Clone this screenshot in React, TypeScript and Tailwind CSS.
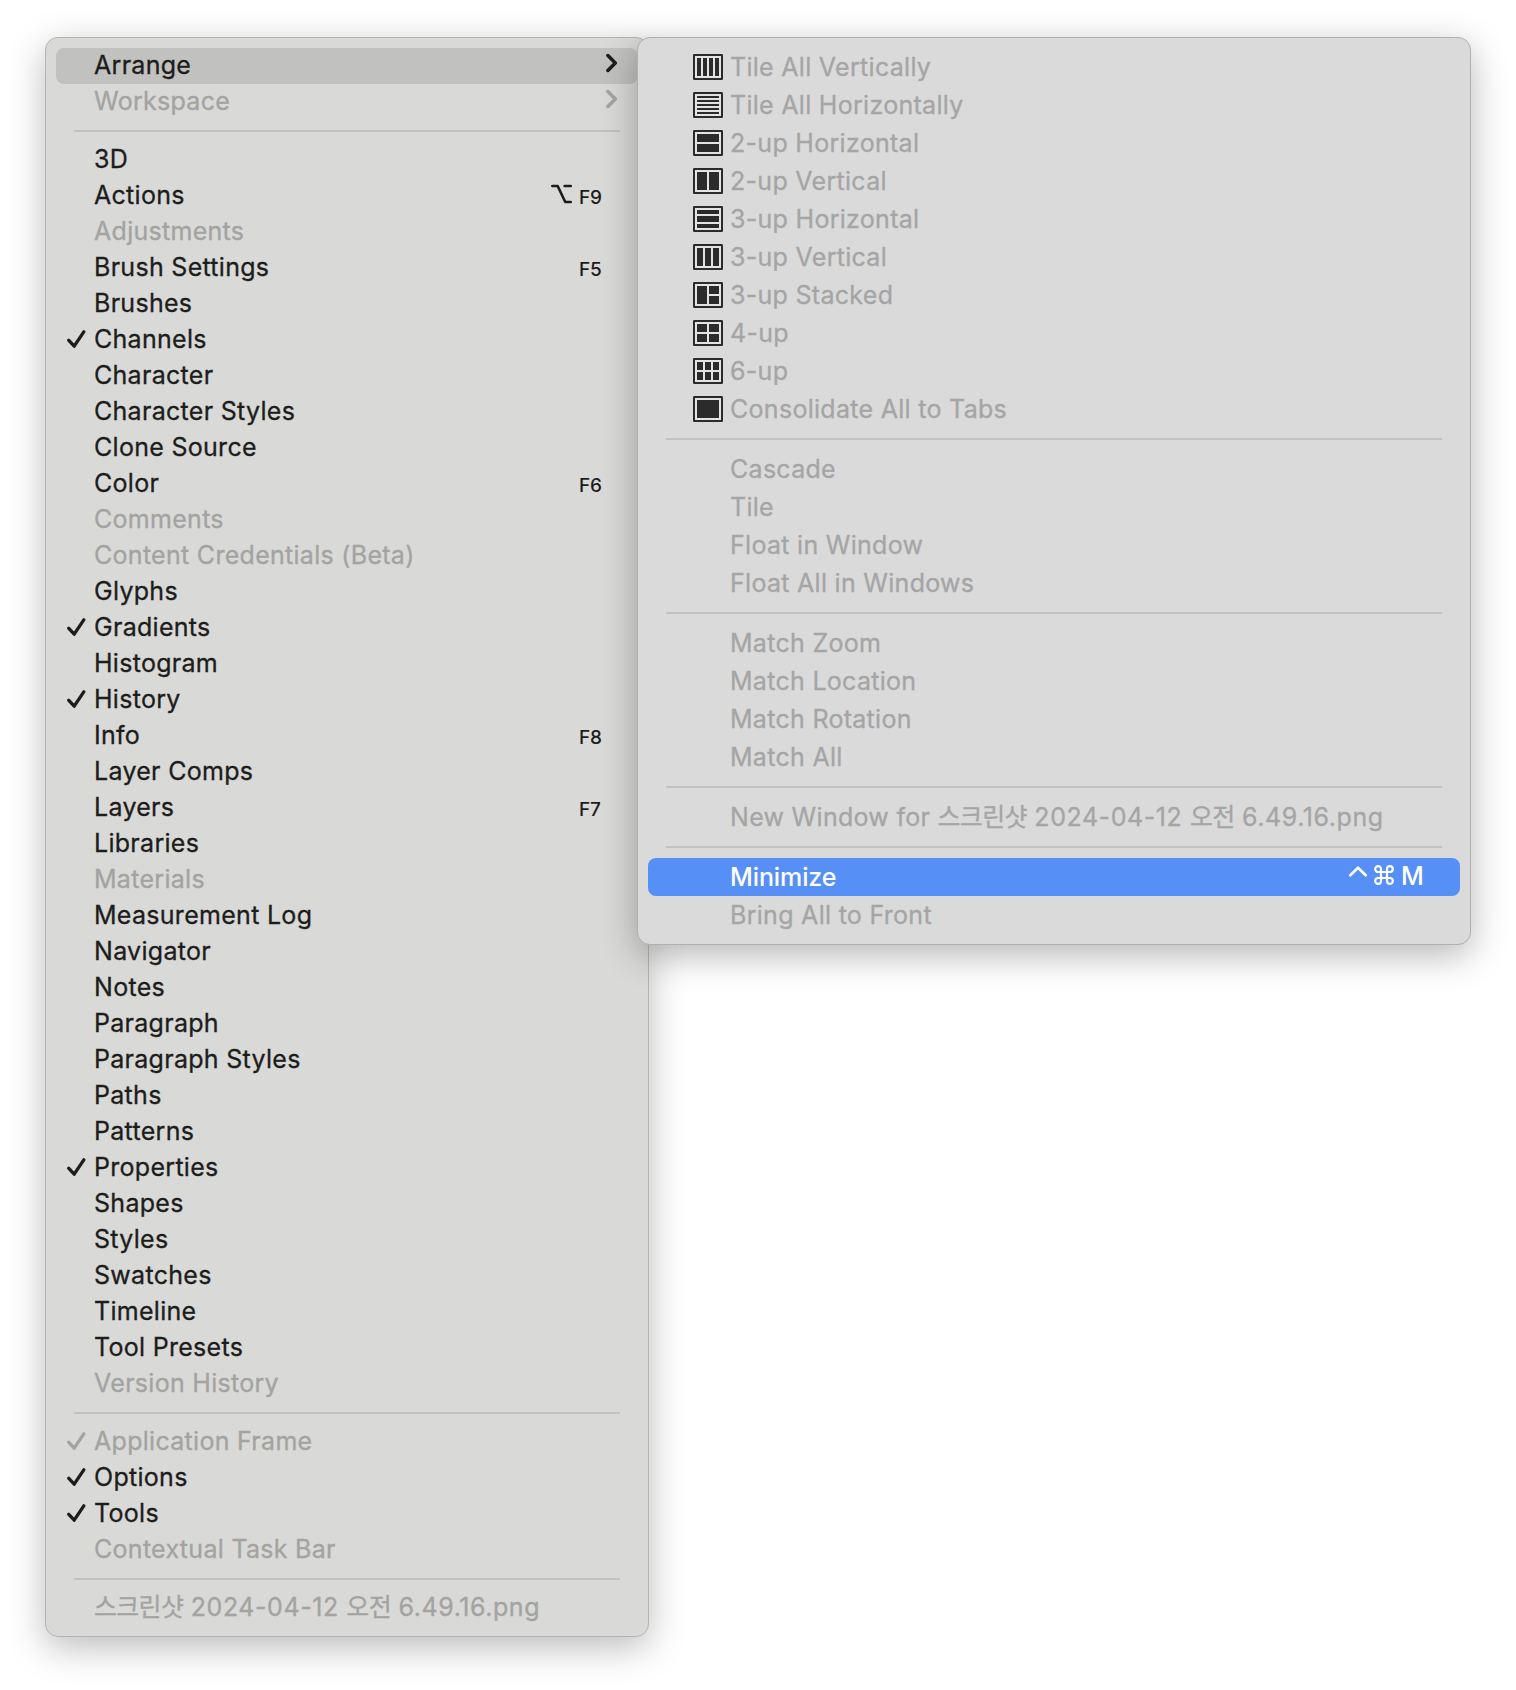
import type { ReactNode } from 'react';
import { clsx } from 'clsx';

type Item = {
  label: ReactNode;
  disabled?: boolean;
  checked?: boolean;
  submenu?: boolean;
  active?: boolean;
  alt?: boolean;
  shortcut?: string;
};

type Rect = [x: number, y: number, width: number, height: number];

const fileName = (
  <span className="tracking-[0.56px]">
    <span className="tracking-[-0.7px]">스크린샷</span> 2024-04-12 <span className="tracking-[-0.7px]">오전</span> 6.49.16.png
  </span>
);

const windowGroups: Item[][] = [
  [
    { label: 'Arrange', submenu: true, active: true },
    { label: 'Workspace', submenu: true, disabled: true },
  ],
  [
    { label: '3D' },
    { label: 'Actions', shortcut: 'F9', alt: true },
    { label: 'Adjustments', disabled: true },
    { label: 'Brush Settings', shortcut: 'F5' },
    { label: 'Brushes' },
    { label: 'Channels', checked: true },
    { label: 'Character' },
    { label: 'Character Styles' },
    { label: 'Clone Source' },
    { label: 'Color', shortcut: 'F6' },
    { label: 'Comments', disabled: true },
    { label: 'Content Credentials (Beta)', disabled: true },
    { label: 'Glyphs' },
    { label: 'Gradients', checked: true },
    { label: 'Histogram' },
    { label: 'History', checked: true },
    { label: 'Info', shortcut: 'F8' },
    { label: 'Layer Comps' },
    { label: 'Layers', shortcut: 'F7' },
    { label: 'Libraries' },
    { label: 'Materials', disabled: true },
    { label: 'Measurement Log' },
    { label: 'Navigator' },
    { label: 'Notes' },
    { label: 'Paragraph' },
    { label: 'Paragraph Styles' },
    { label: 'Paths' },
    { label: 'Patterns' },
    { label: 'Properties', checked: true },
    { label: 'Shapes' },
    { label: 'Styles' },
    { label: 'Swatches' },
    { label: 'Timeline' },
    { label: 'Tool Presets' },
    { label: 'Version History', disabled: true },
  ],
  [
    { label: 'Application Frame', checked: true, disabled: true },
    { label: 'Options', checked: true },
    { label: 'Tools', checked: true },
    { label: 'Contextual Task Bar', disabled: true },
  ],
  [{ label: fileName, disabled: true }],
];

// Panes inside the 30x26 layout icons
const arrangeGroups: { label: ReactNode; panes?: Rect[]; active?: boolean }[][] = [
  [
    { label: 'Tile All Vertically', panes: [[4, 4, 4, 18], [10, 4, 4, 18], [16, 4, 4, 18], [22, 4, 4, 18]] },
    { label: 'Tile All Horizontally', panes: [[4, 4, 22, 2], [4, 8, 22, 2], [4, 12, 22, 2], [4, 16, 22, 2], [4, 20, 22, 2]] },
    { label: '2-up Horizontal', panes: [[4, 4, 22, 8], [4, 14, 22, 8]] },
    { label: '2-up Vertical', panes: [[4, 4, 10, 18], [16, 4, 10, 18]] },
    { label: '3-up Horizontal', panes: [[4, 4, 22, 4], [4, 10, 22, 6], [4, 18, 22, 4]] },
    { label: '3-up Vertical', panes: [[4, 4, 6, 18], [12, 4, 6, 18], [20, 4, 6, 18]] },
    { label: '3-up Stacked', panes: [[4, 4, 10, 18], [16, 4, 10, 8], [16, 14, 10, 8]] },
    { label: '4-up', panes: [[4, 4, 10, 8], [16, 4, 10, 8], [4, 14, 10, 8], [16, 14, 10, 8]] },
    { label: '6-up', panes: [[4, 4, 6, 8], [12, 4, 6, 8], [20, 4, 6, 8], [4, 14, 6, 8], [12, 14, 6, 8], [20, 14, 6, 8]] },
    { label: 'Consolidate All to Tabs', panes: [[4, 4, 22, 18]] },
  ],
  [{ label: 'Cascade' }, { label: 'Tile' }, { label: 'Float in Window' }, { label: 'Float All in Windows' }],
  [{ label: 'Match Zoom' }, { label: 'Match Location' }, { label: 'Match Rotation' }, { label: 'Match All' }],
  [{ label: <>New Window for {fileName}</> }],
  [{ label: 'Minimize', active: true }, { label: 'Bring All to Front' }],
];

function CheckIcon() {
  return (
    <svg width="20" height="20" viewBox="0 0 20 20" fill="none" stroke="currentColor" strokeWidth="3.3" strokeLinecap="round" strokeLinejoin="round">
      <path d="M1.8 11.3 7.2 17.2 16.8 2.8" />
    </svg>
  );
}

function ChevronIcon() {
  return (
    <svg width="12" height="20" viewBox="0 0 12 20" fill="none" stroke="currentColor" strokeWidth="3.5" strokeLinecap="round" strokeLinejoin="round">
      <path d="M1.9 2.6 9.3 10 1.9 17.4" />
    </svg>
  );
}

function OptionIcon() {
  return (
    <svg width="22" height="20" viewBox="0 0 22 20" fill="none" stroke="currentColor" strokeWidth="2.5" strokeLinecap="round" strokeLinejoin="round">
      <path d="M1.3 1.9H6.6L14.2 17.9H19.8M13.6 1.9H19.8" />
    </svg>
  );
}

function ControlIcon() {
  return (
    <svg width="20" height="20" viewBox="0 0 20 20" fill="none" stroke="currentColor" strokeWidth="2.7" strokeLinecap="round" strokeLinejoin="round">
      <path d="M2.3 10.2 10 2.7 17.7 10.2" />
    </svg>
  );
}

function CommandIcon() {
  return (
    <svg width="20" height="20" viewBox="0 0 20 20" fill="none" stroke="currentColor" strokeWidth="2.2">
      <path d="M7 7V4.2A2.9 2.9 0 1 0 4.1 7H16A2.9 2.9 0 1 0 13 4.1V16A2.9 2.9 0 1 0 15.9 13H4.1A2.9 2.9 0 1 0 7 15.9Z" />
    </svg>
  );
}

function LayoutIcon({ panes }: { panes: Rect[] }) {
  return (
    <svg width="30" height="26" viewBox="0 0 30 26" fill="#2b2b2b">
      <rect x="1" y="1" width="28" height="24" rx="0.3" fill="#e3e3e3" stroke="#2b2b2b" strokeWidth="2" />
      {panes.map(([x, y, width, height]) => (
        <rect key={`${x}-${y}`} x={x} y={y} width={width} height={height} />
      ))}
    </svg>
  );
}

function WindowItem({ item }: { item: Item }) {
  return (
    <div
      className={clsx(
        'flex h-9 items-start rounded-[8px] pl-[11px]',
        item.active && 'bg-[#c1c1bf]',
        item.disabled ? 'text-[#a3a3a2]' : 'text-[#1d1d1c]',
      )}
    >
      <span className="w-[27px] pt-[7px]">{item.checked && <CheckIcon />}</span>
      <span className="flex-1 leading-[34px] [-webkit-text-stroke:0.3px]">{item.label}</span>
      {item.alt && (
        <span className="mr-[6px] pt-[6px]">
          <OptionIcon />
        </span>
      )}
      {item.shortcut && (
        <span className="mr-[35px] w-[24px] pt-[4px] text-[19px] leading-[32px] font-medium tracking-[-0.2px]">{item.shortcut}</span>
      )}
      {item.submenu && (
        <span className="mr-[20px] pt-[5px]">
          <ChevronIcon />
        </span>
      )}
    </div>
  );
}

function WindowMenu() {
  return (
    <div className="w-[604px] shrink-0 rounded-[13px] border border-[#b4b4b3] bg-[#d9d9d7] p-[10px] shadow-[0_10px_36px_rgba(0,0,0,0.27)]">
      {windowGroups.map((group, index) => (
        <div key={index}>
          {index > 0 && <div className="mx-[18px] my-[10px] h-[2px] bg-[#c1c1c0]" />}
          {group.map((item, i) => (
            <WindowItem key={i} item={item} />
          ))}
        </div>
      ))}
    </div>
  );
}

function ArrangeMenu() {
  return (
    <div className="relative -ml-[12px] w-[834px] shrink-0 rounded-[13px] border border-[#b0b0b0] bg-[#dadada] p-[10px] shadow-[0_10px_36px_rgba(0,0,0,0.29)]">
      {arrangeGroups.map((group, index) => (
        <div key={index}>
          {index > 0 && <div className="mx-[18px] my-[10px] h-[2px] bg-[#c2c2c2]" />}
          {group.map((item, i) => (
            <div
              key={i}
              className={clsx('flex h-[38px] items-start rounded-[8px] pl-[45px]', item.active ? 'bg-[#568ff6] text-white' : 'text-[#a5a5a5]')}
            >
              <span className="w-[37px] pt-[6px]">{item.panes && <LayoutIcon panes={item.panes} />}</span>
              <span className={clsx('flex-1 leading-[38px]', item.active ? 'font-medium tracking-[-0.1px]' : '[-webkit-text-stroke:0.3px]')}>
                {item.label}
              </span>
              {item.active && (
                <span className="mr-[36px] flex items-start gap-[6px] pt-[7px]">
                  <ControlIcon />
                  <CommandIcon />
                  <span className="ml-[1px] leading-[22px] font-medium">M</span>
                </span>
              )}
            </div>
          ))}
        </div>
      ))}
    </div>
  );
}

export default function App() {
  return (
    <div className="flex h-[1690px] w-[1516px] items-start overflow-hidden bg-white pt-[37px] pl-[45px] font-['Inter','Noto_Sans_CJK_KR',sans-serif] text-[25px] tracking-[0.29px] whitespace-nowrap">
      <WindowMenu />
      <ArrangeMenu />
    </div>
  );
}
